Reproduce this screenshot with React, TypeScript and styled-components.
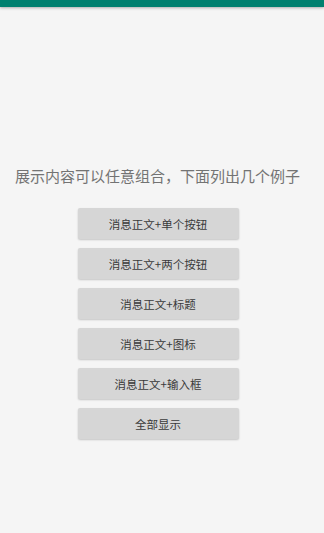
import styled, { createGlobalStyle } from "styled-components";

const GlobalStyle = createGlobalStyle`
  html, body {
    margin: 0;
    padding: 0;
    background-color: #f5f5f5;
    font-family: "Noto Sans CJK SC", "Noto Sans", sans-serif;
  }
`;

const Page = styled.div`
  min-height: 533px;
  background-color: #f5f5f5;
  display: flex;
  flex-direction: column;
`;

const StatusBar = styled.div`
  height: 7px;
  background-color: #00806f;
  box-shadow: 0 1px 3px rgba(0, 0, 0, 0.3);
`;

const Content = styled.div`
  display: flex;
  flex-direction: column;
  align-items: center;
  padding-top: 159px;
`;

const Intro = styled.p`
  align-self: flex-start;
  margin: 0 0 22px 15px;
  font-size: 15px;
  line-height: 20px;
  color: #737373;
  white-space: nowrap;
`;

const ButtonList = styled.div`
  display: flex;
  flex-direction: column;
  gap: 9px;
  margin-right: 8px;
`;

const DemoButton = styled.button`
  width: 161px;
  height: 31px;
  border: none;
  border-radius: 2px;
  background-color: #d6d6d6;
  box-shadow: 0 1px 2px rgba(0, 0, 0, 0.2);
  font-family: "Noto Sans CJK SC", "Noto Sans", sans-serif;
  font-size: 11.5px;
  color: #3a3a3a;
  padding: 0;
  text-align: center;
  cursor: pointer;
`;

const demos = [
  "消息正文+单个按钮",
  "消息正文+两个按钮",
  "消息正文+标题",
  "消息正文+图标",
  "消息正文+输入框",
  "全部显示",
];

const App = () => {
  return (
    <Page>
      <GlobalStyle />
      <StatusBar />
      <Content>
        <Intro>展示内容可以任意组合，下面列出几个例子</Intro>
        <ButtonList>
          {demos.map((label) => (
            <DemoButton key={label}>{label}</DemoButton>
          ))}
        </ButtonList>
      </Content>
    </Page>
  );
};

export default App;
